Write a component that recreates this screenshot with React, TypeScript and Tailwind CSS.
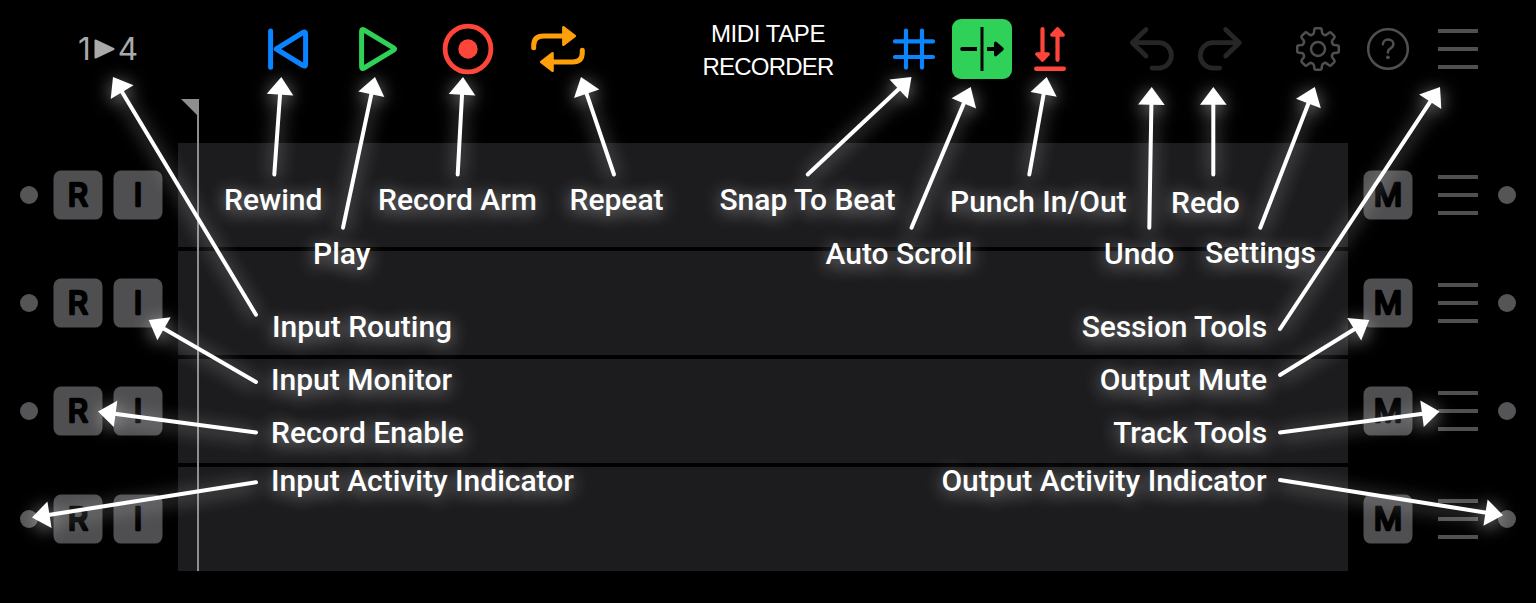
import React from "react";

type Point = [number, number];

const arrows: { from: Point; tip: Point }[] = [
  { from: [256, 314.7], tip: [113, 77] },
  { from: [274.3, 174.5], tip: [281.3, 77] },
  { from: [343, 227.7], tip: [375, 77] },
  { from: [457.7, 174.5], tip: [463, 77] },
  { from: [614, 174.5], tip: [581, 77] },
  { from: [807.7, 174.5], tip: [911.5, 77] },
  { from: [911.5, 227.7], tip: [970.7, 87] },
  { from: [1029.3, 174.5], tip: [1046.7, 77] },
  { from: [1149.3, 227.7], tip: [1151.7, 87] },
  { from: [1213.3, 174.5], tip: [1213.3, 87] },
  { from: [1260.3, 227.7], tip: [1314.8, 87] },
  { from: [1280, 329], tip: [1440, 87] },
  { from: [256, 382], tip: [148.7, 320] },
  { from: [256, 432.4], tip: [98, 411.5] },
  { from: [256, 482.3], tip: [32, 517.5] },
  { from: [1280, 375], tip: [1369.3, 320] },
  { from: [1280, 432.5], tip: [1439.6, 411.5] },
  { from: [1280, 480], tip: [1503, 515.3] },
];

const labels: { text: string; place: string }[] = [
  { text: "Rewind", place: "left-[224px] top-[182px]" },
  { text: "Play", place: "left-[313px] top-[236px]" },
  { text: "Record Arm", place: "left-[378px] top-[182px]" },
  { text: "Repeat", place: "left-[569.5px] top-[182px]" },
  { text: "Snap To Beat", place: "left-[719.5px] top-[182px] tracking-[-0.05px]" },
  { text: "Auto Scroll", place: "left-[825.5px] top-[236px]" },
  { text: "Punch In/Out", place: "left-[950px] top-[184px]" },
  { text: "Undo", place: "left-[1104px] top-[236px]" },
  { text: "Redo", place: "left-[1171px] top-[185px]" },
  { text: "Settings", place: "left-[1205px] top-[235px]" },
  { text: "Input Routing", place: "left-[272px] top-[309px]" },
  { text: "Input Monitor", place: "left-[271px] top-[362px]" },
  { text: "Record Enable", place: "left-[271px] top-[415px]" },
  { text: "Input Activity Indicator", place: "left-[271px] top-[463px]" },
  { text: "Session Tools", place: "right-[269px] top-[309px] tracking-[-0.1px]" },
  { text: "Output Mute", place: "right-[269px] top-[362px]" },
  { text: "Track Tools", place: "right-[269px] top-[415px] tracking-[-0.1px]" },
  { text: "Output Activity Indicator", place: "right-[269.5px] top-[463px]" },
];

function Arrow({ from, tip }: { from: Point; tip: Point }) {
  const dx = tip[0] - from[0];
  const dy = tip[1] - from[1];
  const len = Math.hypot(dx, dy);
  const ux = dx / len;
  const uy = dy / len;
  const bx = tip[0] - ux * 17.7;
  const by = tip[1] - uy * 17.7;
  const half = 13.3;
  return (
    <g>
      <line x1={from[0]} y1={from[1]} x2={bx + ux} y2={by + uy} stroke="#fff" strokeWidth="4" strokeLinecap="round" />
      <polygon
        fill="#fff"
        points={`${tip[0]},${tip[1]} ${bx - uy * half},${by + ux * half} ${bx + uy * half},${by - ux * half}`}
      />
    </g>
  );
}

function gearPath(cx: number, cy: number) {
  const at = (r: number, deg: number) => {
    const a = (deg * Math.PI) / 180;
    return `${(cx + r * Math.sin(a)).toFixed(2)} ${(cy - r * Math.cos(a)).toFixed(2)}`;
  };
  let d = "";
  for (let i = 0; i < 8; i++) {
    const t = i * 45;
    d += `${i ? "L" : "M"}${at(16.8, t - 14)}L${at(19.4, t - 11)}Q${at(21, t - 10)} ${at(20.9, t - 6)}`;
    d += `L${at(20.9, t + 6)}Q${at(21, t + 10)} ${at(19.4, t + 11)}L${at(16.8, t + 14)}`;
    d += `Q${at(15, t + 18)} ${at(15.6, t + 22.5)}Q${at(15, t + 27)} ${at(16.8, t + 31)}`;
  }
  return d + "Z";
}

function Burger() {
  return (
    <div className="flex w-10 shrink-0 flex-col gap-[14px]">
      <span className="h-1 bg-[#505052]" />
      <span className="h-1 bg-[#505052]" />
      <span className="h-1 bg-[#505052]" />
    </div>
  );
}

function Dot() {
  return <span className="size-[18px] shrink-0 rounded-full bg-[#555557]" />;
}

function Key({ children }: { children: React.ReactNode }) {
  return (
    <svg className="size-[50px] shrink-0" viewBox="0 0 50 50">
      <rect x="0.5" y="0.6" width="49" height="49" rx="7.5" fill="#4f4f51" />
      <text
        x="25"
        y="36.3"
        textAnchor="middle"
        className="fill-black stroke-black stroke-[2.6px] font-['Inter',sans-serif] text-[31.5px] font-normal [stroke-linejoin:round]"
      >
        {children}
      </text>
    </svg>
  );
}

function Header() {
  return (
    <header className="flex h-[98px] items-center pl-[78px]">
      <div className="flex w-[60px] shrink-0 items-center justify-between pb-px font-['Inter',sans-serif] text-[31.5px] leading-none font-normal text-[#aaaaac]">
        <span className="-mr-1">1</span>
        <svg className="mt-px ml-px h-5 w-[21px] shrink-0" viewBox="0 0 21 20">
          <path d="M1.5 1.5L19.5 10L1.5 18.5Z" fill="#aaaaac" stroke="#aaaaac" strokeWidth="2" strokeLinejoin="round" />
        </svg>
        <span className="-ml-1">4</span>
      </div>

      <svg className="ml-[128px] h-[46px] w-11 shrink-0" viewBox="266 26 44 46" fill="none" stroke="#0a84ff" strokeWidth="5" strokeLinecap="round" strokeLinejoin="round">
        <path d="M270.6 31V67.3" />
        <path d="M276.3 49L303 32.5Q305.6 31 305.6 34V64Q305.6 67.2 303 65.5Z" />
      </svg>

      <svg className="ml-[46px] h-[46px] w-11 shrink-0" viewBox="356 26 44 46" fill="none" stroke="#30d158" strokeWidth="5" strokeLinejoin="round">
        <path d="M361.6 31.5Q361.6 28.6 364 30L393.6 47.8Q395.6 49 393.6 50.2L364 68Q361.6 69.4 361.6 66.5Z" />
      </svg>

      <svg className="ml-[42px] h-[52px] w-[52px] shrink-0" viewBox="442 23 52 52">
        <circle cx="468" cy="49" r="22.9" fill="none" stroke="#ff453a" strokeWidth="4.8" />
        <circle cx="468" cy="49" r="9.7" fill="#ff453a" />
      </svg>

      <svg className="ml-9 h-12 w-14 shrink-0" viewBox="530 25 56 48" fill="none" stroke="#ff9f0a" strokeWidth="5" strokeLinecap="round" strokeLinejoin="round">
        <path d="M533.7 47.7V45.5Q533.7 36 543.5 36H563" />
        <path d="M582.3 50.3V52.5Q582.3 62 572.5 62H553" />
        <path d="M563.4 27.4L574.8 36L563.4 44.6Z" fill="#ff9f0a" strokeWidth="2.6" />
        <path d="M552.5 53.4L541.2 62L552.5 70.6Z" fill="#ff9f0a" strokeWidth="2.6" />
      </svg>

      <h1 className="ml-[107px] w-[150px] shrink-0 pt-px text-center font-['Liberation_Sans',sans-serif] text-[24px] leading-[33px] tracking-[-0.4px] text-white">
        MIDI TAPE
        <br />
        <span className="tracking-[-0.8px]">RECORDER</span>
      </h1>

      <svg className="ml-[49px] h-11 w-11 shrink-0" viewBox="892 27 44 44" fill="none" stroke="#0a84ff" strokeWidth="4.2" strokeLinecap="round">
        <path d="M906 30.6V67.6M922 30.6V67.6M895 41.4H933M895 57H933" />
      </svg>

      <div className="ml-4 flex size-[60px] shrink-0 items-center justify-center rounded-[9px] bg-[#30d158]">
        <svg className="size-[60px]" viewBox="952 19 60 60" fill="none" stroke="#000">
          <path d="M962.2 49H975" strokeWidth="4" strokeLinecap="round" />
          <path d="M970 49H977M987 49H996" strokeWidth="4" />
          <path d="M982 27V71" strokeWidth="3" />
          <path d="M995.6 43.2L1002.2 49L995.6 54.8Z" fill="#000" strokeWidth="3.2" strokeLinejoin="round" />
        </svg>
      </div>

      <svg className="ml-5 h-[46px] w-9 shrink-0" viewBox="1032 26 36 46" fill="none" stroke="#ff453a" strokeWidth="4.2" strokeLinecap="round" strokeLinejoin="round">
        <path d="M1042.5 29.2V54M1057.5 59.8V35" />
        <path d="M1036.8 54H1048.2L1042.5 60.2Z" fill="#ff453a" strokeWidth="3.4" />
        <path d="M1051.8 35H1063.2L1057.5 28.8Z" fill="#ff453a" strokeWidth="3.4" />
        <path d="M1036.3 68.7H1063.7" strokeWidth="4.6" />
      </svg>

      <svg className="ml-[60px] h-[46px] w-12 shrink-0" viewBox="1128 26 48 46" fill="none" stroke="#262626" strokeWidth="4.7" strokeLinecap="round" strokeLinejoin="round">
        <path d="M1146 29.5L1132.3 42.7L1146 56M1132.3 42.7H1158.7A12.7 12.7 0 0 1 1158.7 68.1H1152" />
      </svg>

      <svg className="ml-5 h-[46px] w-12 shrink-0" viewBox="1196 26 48 46" fill="none" stroke="#262626" strokeWidth="4.7" strokeLinecap="round" strokeLinejoin="round">
        <path d="M1225.6 29.5L1239.3 42.7L1225.6 56M1239.3 42.7H1213A12.7 12.7 0 0 0 1213 68.1H1219.7" />
      </svg>

      <svg className="ml-[51px] size-[46px] shrink-0" viewBox="1295 26 46 46" fill="none" stroke="#4f4f51" strokeWidth="2.5" strokeLinejoin="round">
        <path d={gearPath(1318, 49)} />
        <circle cx="1318" cy="49" r="7" />
      </svg>

      <svg className="ml-[26px] size-[42px] shrink-0" viewBox="1367 28 42 42" fill="none" stroke="#4f4f51" strokeWidth="2.5" strokeLinecap="round" strokeLinejoin="round">
        <circle cx="1388" cy="49" r="19.8" />
        <path d="M1382.9 44.2C1383 41.4 1385.2 39.6 1388.1 39.6C1391.2 39.6 1393.4 41.5 1393.4 44.1C1393.4 46.2 1392.4 47.3 1390.6 48.4C1388.6 49.6 1387.9 50.4 1387.9 52.2V52.6" />
        <circle cx="1387.9" cy="57.3" r="1.9" fill="#4f4f51" stroke="none" />
      </svg>

      <div className="ml-[29px]">
        <Burger />
      </div>
    </header>
  );
}

function Track() {
  return (
    <div className="flex h-[104px] items-center pl-5">
      <Dot />
      <div className="mr-[15px] ml-[15px] flex gap-[10px]">
        <Key>R</Key>
        <Key>I</Key>
      </div>
      <div className="h-full w-[1170px] shrink-0 bg-[#1c1c1e]" />
      <div className="mr-[25px] ml-[15px] flex">
        <Key>M</Key>
      </div>
      <Burger />
      <div className="ml-5 flex">
        <Dot />
      </div>
    </div>
  );
}

export default function App() {
  return (
    <div className="relative h-[603px] w-[1536px] overflow-hidden bg-black">
      <Header />
      <main className="flex flex-col gap-1 pt-[45px]">
        <Track />
        <Track />
        <Track />
        <Track />
      </main>

      <svg className="absolute top-[99px] left-[180px] h-[472px] w-5" viewBox="0 0 20 472">
        <path d="M1 0H19V472H17V16Z" fill="#8e8e90" />
      </svg>

      <svg className="absolute inset-0 h-[603px] w-[1536px] [filter:drop-shadow(0_3px_9px_rgba(255,255,255,0.6))]" viewBox="0 0 1536 603">
        {arrows.map((a, i) => (
          <Arrow key={i} {...a} />
        ))}
      </svg>

      <div className="absolute inset-0 font-['Roboto',sans-serif] text-[30px] leading-9 font-medium whitespace-nowrap text-white [text-shadow:0_3px_18px_rgba(255,255,255,0.6)]">
        {labels.map((l) => (
          <span key={l.text} className={`absolute ${l.place}`}>
            {l.text}
          </span>
        ))}
      </div>
    </div>
  );
}
